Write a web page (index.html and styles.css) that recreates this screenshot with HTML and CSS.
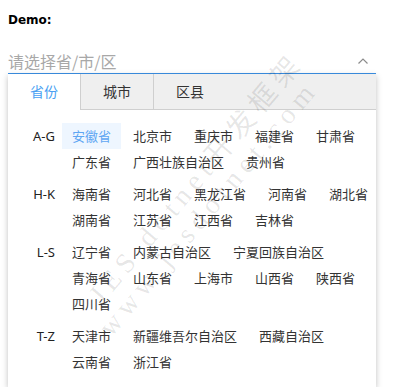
FILE: index.html
```html
<!DOCTYPE html>
<html lang="zh-CN">

<head>
  <meta charset="UTF-8">
  <meta name="viewport" content="width=device-width,initial-scale=1.0">
  <title>Demo</title>
  <link rel="stylesheet" href="styles.css">
</head>

<body>
  <div class="page">
    <div class="title">Demo:</div>

    <div class="picker">
      <span class="placeholder">请选择省/市/区</span>
      <svg class="arrow" width="10" height="6" viewBox="0 0 10 6">
        <polyline points="0.5,5.5 5,1 9.5,5.5" fill="none" stroke="#8c8c8c" stroke-width="1.2" />
      </svg>
    </div>

    <div class="panel">
      <div class="tabs">
        <div class="tab active">省份</div>
        <div class="tab">城市</div>
        <div class="tab">区县</div>
      </div>

      <div class="groups">
        <div class="group">
          <div class="letter">A-G</div>
          <div class="items">
            <span class="item selected">安徽省</span>
            <span class="item">北京市</span>
            <span class="item">重庆市</span>
            <span class="item">福建省</span>
            <span class="item">甘肃省</span>
            <span class="item">广东省</span>
            <span class="item">广西壮族自治区</span>
            <span class="item">贵州省</span>
          </div>
        </div>
        <div class="group">
          <div class="letter">H-K</div>
          <div class="items">
            <span class="item">海南省</span>
            <span class="item">河北省</span>
            <span class="item">黑龙江省</span>
            <span class="item">河南省</span>
            <span class="item">湖北省</span>
            <span class="item">湖南省</span>
            <span class="item">江苏省</span>
            <span class="item">江西省</span>
            <span class="item">吉林省</span>
          </div>
        </div>
        <div class="group">
          <div class="letter">L-S</div>
          <div class="items">
            <span class="item">辽宁省</span>
            <span class="item">内蒙古自治区</span>
            <span class="item">宁夏回族自治区</span>
            <span class="item">青海省</span>
            <span class="item">山东省</span>
            <span class="item">上海市</span>
            <span class="item">山西省</span>
            <span class="item">陕西省</span>
            <span class="item">四川省</span>
          </div>
        </div>
        <div class="group">
          <div class="letter">T-Z</div>
          <div class="items">
            <span class="item">天津市</span>
            <span class="item">新疆维吾尔自治区</span>
            <span class="item">西藏自治区</span>
            <span class="item">云南省</span>
            <span class="item">浙江省</span>
          </div>
        </div>
      </div>
    </div>
  </div>

  <!-- watermark of the source site, sits over everything -->
  <div class="watermark">
    <div class="mark-one">JES dotnet开发框架</div>
    <div class="mark-two">www.jesdotnet.com</div>
  </div>
</body>

</html>
```

FILE: styles.css
```css
body{
  margin: 0;
  background: white;
  font-family: "Noto Sans", "Noto Sans CJK SC", sans-serif;
  color: #333;
}
.page{
  padding: 0 8px;
}
.title{
  font-family: "DejaVu Sans", sans-serif;
  font-weight: bold;
  font-size: 12px;
  line-height: 16px;
  padding-top: 12px;
  color: #000;
}
.picker{
  width: 368px;
  height: 28px;
  margin-top: 17px;
  display: flex;
  align-items: center;
  justify-content: space-between;
  border-bottom: 1px solid #3c91e6;
}
.placeholder{
  font-family: "Noto Sans CJK SC", sans-serif;
  font-size: 16px;
  color: #a8a8a8;
  line-height: 20px;
  padding-top: 4px;
}
.arrow{
  margin-right: 8px;
  margin-top: 3px;
}
.panel{
  width: 368px;
  background: white;
  box-shadow: 0 2px 6px rgba(0, 0, 0, 0.25);
  padding-bottom: 12px;
}
.tabs{
  display: flex;
  height: 35px;
  background: #efefef;
  border-bottom: 1px solid #cfcfcf;
}
.tab{
  padding: 0 22px;
  font-family: "Noto Sans CJK SC", sans-serif;
  font-size: 14px;
  line-height: 35px;
  color: #333;
  border-left: 1px solid #cfcfcf;
}
.tab.active{
  border-left: none;
  background: white;
  color: #4a9ff2;
  height: 36px; /* covers the bar's bottom border */
}
.groups{
  padding-top: 13px;
  display: flex;
  flex-direction: column;
  gap: 6px;
}
.group{
  display: flex;
  align-items: flex-start;
}
.letter{
  width: 47px;
  flex-shrink: 0;
  text-align: right;
  font-size: 13px;
  line-height: 26px;
  color: #222;
}
.items{
  width: 330px; /* a bit wider than the panel, as in the original */
  flex-shrink: 0;
  margin-left: 6px;
  display: flex;
  flex-wrap: wrap;
}
.item{
  font-family: "Noto Sans CJK SC", sans-serif;
  font-size: 13px;
  line-height: 26px;
  padding: 0 10px;
  margin: 0 1px;
  white-space: nowrap;
  color: #333;
}
.item.selected{
  background: #eef6ff;
  color: #5ea6f3;
}
.watermark{
  position: absolute;
  top: 0;
  left: 0;
  width: 406px;
  height: 390px;
  overflow: hidden;
  pointer-events: none;
}
.watermark div{
  position: absolute;
  font-family: "Liberation Serif", "Noto Sans CJK SC", serif;
  font-size: 28px;
  letter-spacing: 6px;
  color: rgba(0, 0, 0, 0.1);
  white-space: nowrap;
  transform-origin: 0 0;
  transform: rotate(-50deg);
}
.mark-one{
  left: 77px;
  top: 285px;
}
.mark-two{
  left: 92px;
  top: 322px;
}
```
